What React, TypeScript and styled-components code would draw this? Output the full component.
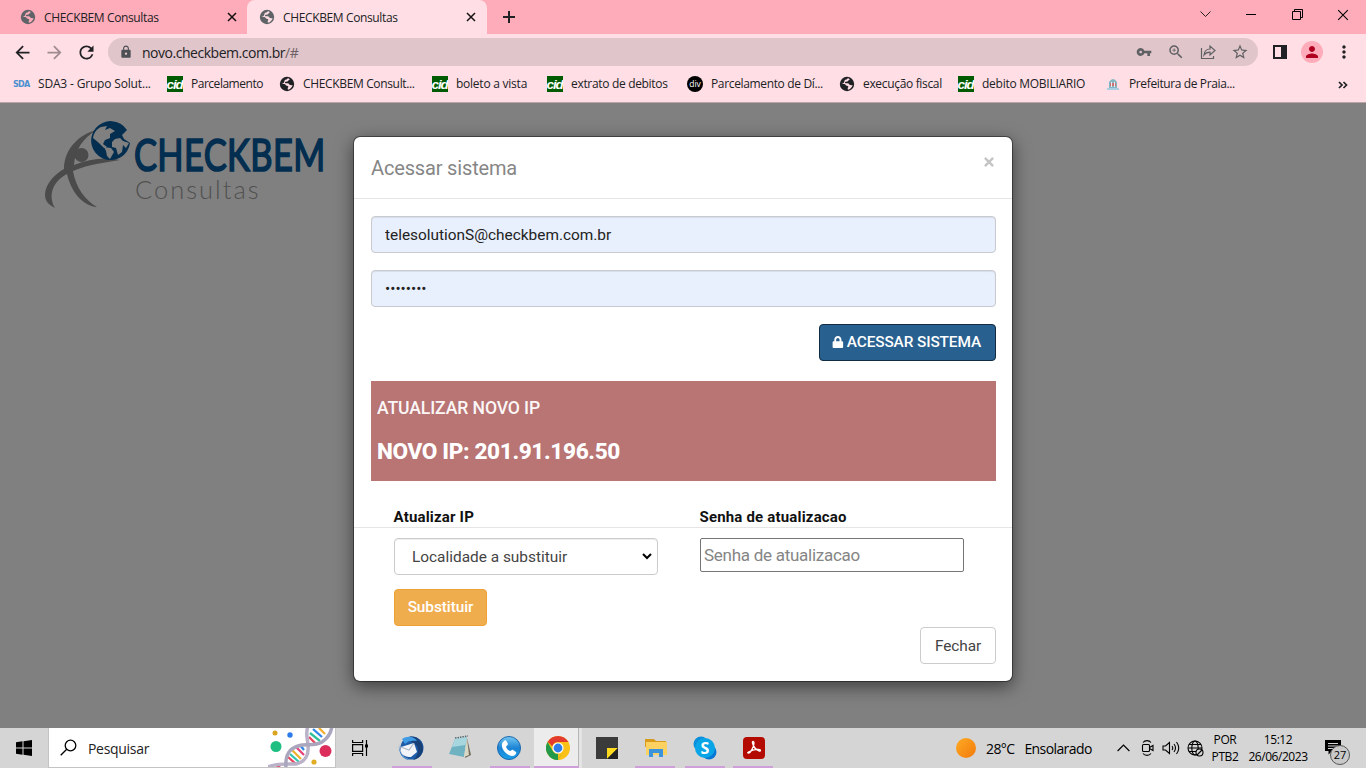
import React from "react";
import styled, { createGlobalStyle } from "styled-components";
import {
  MdArrowBack, MdArrowForward, MdRefresh, MdLock, MdVpnKey, MdZoomIn, MdStarBorder, MdPerson, MdMoreVert,
} from "react-icons/md";
import { FaLock } from "react-icons/fa";

const GlobalStyle = createGlobalStyle`
  * { box-sizing: border-box; }
  body { margin: 0; overflow: hidden; }
  button, input, select { font-family: inherit; margin: 0; }
`;

const Screen = styled.div`
  width: 1366px;
  height: 768px;
  display: flex;
  flex-direction: column;
  font-family: "Open Sans", "Noto Sans", sans-serif;
  font-size: 12px;
  color: #202124;
`;

const Label = styled.span<{ $size?: number; $spacing?: number; $color?: string }>`
  font-size: ${(p) => p.$size ?? 12}px;
  letter-spacing: ${(p) => p.$spacing ?? 0}px;
  color: ${(p) => p.$color ?? "inherit"};
  white-space: nowrap;
`;

/* ---------- browser chrome ---------- */

const TabStrip = styled.div`
  height: 34px;
  background: #ffacba;
  display: flex;
  flex: none;
`;

const Tab = styled.div<{ $active?: boolean }>`
  width: ${(p) => (p.$active ? 240 : 247)}px;
  height: 34px;
  padding: ${(p) => (p.$active ? "0 11px 0 12px" : "0 10px 0 20px")};
  display: flex;
  align-items: center;
  gap: 8px;
  background: ${(p) => (p.$active ? "#ffdfe5" : "transparent")};
  border-radius: 8px 8px 0 0;
  ${Label} { flex: 1; }
`;

const NewTab = styled.div`
  width: 44px;
  display: flex;
  align-items: center;
  justify-content: center;
`;

const WindowButtons = styled.div`
  margin-left: auto;
  display: flex;
  height: 29px;
`;

const WindowButton = styled.div`
  width: 46px;
  display: flex;
  align-items: center;
  justify-content: center;
`;

const Toolbar = styled.div`
  height: 34px;
  flex: none;
  background: #ffdfe5;
  display: flex;
  align-items: center;
  padding-top: 2px;
`;

const NavButton = styled.div<{ $dim?: boolean }>`
  width: 32px;
  display: flex;
  justify-content: center;
  color: ${(p) => (p.$dim ? "#9f8b90" : "#202124")};
`;

const NavGroup = styled.div`
  display: flex;
  padding: 0 6px;
`;

const Address = styled.div`
  width: 1150px;
  height: 28px;
  border-radius: 14px;
  background: #e0c5ca;
  display: flex;
  align-items: center;
  padding: 0 2px 0 11px;
`;

const Url = styled.div`
  flex: 1;
  padding-left: 9px;
  font-size: 14px;
  letter-spacing: -0.47px;
`;

const AddressAction = styled.div`
  width: 32px;
  display: flex;
  justify-content: center;
  color: #5f6064;
`;

const ToolbarEnd = styled.div`
  display: flex;
  align-items: center;
  padding-left: 6px;
`;

const Avatar = styled.div`
  width: 22px;
  height: 22px;
  border-radius: 50%;
  background: #ffacba;
  color: #b00020;
  display: flex;
  align-items: center;
  justify-content: center;
`;

const Bookmarks = styled.div`
  height: 35px;
  flex: none;
  background: #ffdfe5;
  border-bottom: 1px solid #b9a4a8;
  display: flex;
  align-items: center;
  padding: 0 18px 2px 13px;
`;

const Bookmark = styled.div<{ $w: number }>`
  width: ${(p) => p.$w}px;
  display: flex;
  align-items: center;
  gap: 8px;
  ${Label} { margin-top: -1px; }
`;

const CidBadge = styled.svg`
  background: #005a00;
`;

const DivBadge = styled.div`
  width: 16px;
  height: 16px;
  border-radius: 50%;
  background: #000;
  color: #fff;
  font: 8.5px/15px "Open Sans", sans-serif;
  text-align: center;
`;

const SdaBadge = styled.div`
  width: 17px;
  height: 16px;
  color: #4a8fd0;
  font: bold 8px/17px "DejaVu Sans", sans-serif;
  letter-spacing: -0.7px;
`;

const More = styled.div`
  margin-left: auto;
`;

/* ---------- web page ---------- */

const Page = styled.main`
  position: relative;
  height: 625px;
  flex: none;
  background: #808080;
  padding: 13px 0 0 40px;
  overflow: hidden;
  font-family: Roboto, sans-serif;
`;

const Dialog = styled.section`
  position: absolute;
  left: 353px;
  top: 33px;
  width: 660px;
  height: 546px;
  background: #fff;
  background-clip: padding-box;
  border: 1px solid rgba(0, 0, 0, 0.4);
  border-radius: 7px;
  box-shadow: 0 5px 17px rgba(0, 0, 0, 0.5);
  font-size: 15px;
  letter-spacing: 0;
  color: #666;
`;

const DialogHeader = styled.header`
  height: 62px;
  border-bottom: 1px solid #e5e5e5;
  padding: 17px 18px 0 17px;
  display: flex;
  justify-content: space-between;
`;

const Title = styled.h4`
  margin: 0;
  font-size: 20px;
  line-height: 28px;
  font-weight: 400;
  letter-spacing: -0.16px;
  color: #868686;
`;

const CloseMark = styled.svg`
  margin-top: 3px;
`;

const DialogBody = styled.div`
  height: 328px;
  padding: 17px 16px 0 17px;
  display: flex;
  flex-direction: column;
`;

const LoginField = styled.input`
  width: 100%;
  height: 37px;
  flex: none;
  margin-bottom: 17px;
  padding: 0 13px;
  border: 1px solid #c8cacd;
  border-radius: 4px;
  background: #e8effd;
  box-shadow: inset 0 1px 1px rgba(0, 0, 0, 0.075);
  font-size: 15.4px;
  letter-spacing: 0;
  color: #222;
`;

const Button = styled.button<{ $kind: "primary" | "warning" | "plain" }>`
  height: 37px;
  padding: 0 13px;
  border-radius: 4px;
  display: inline-flex;
  align-items: center;
  justify-content: center;
  gap: 3px;
  white-space: nowrap;
  font-size: 15.4px;
  letter-spacing: -0.08px;
  font-weight: ${(p) => (p.$kind === "plain" ? 400 : 500)};
  border: 1px solid ${(p) => ({ primary: "#122b40", warning: "#eea236", plain: "#ccc" })[p.$kind]};
  background: ${(p) => ({ primary: "#286090", warning: "#f0ad4e", plain: "#fff" })[p.$kind]};
  color: ${(p) => (p.$kind === "plain" ? "#444" : "#fff")};
`;

const SignInButton = styled(Button)`
  width: 177px;
  align-self: flex-end;
  flex: none;
  letter-spacing: -0.12px;
  padding: 0 14px 2px 12px;
`;

const IpNotice = styled.div`
  margin-top: 20px;
  height: 100px;
  flex: none;
  background: #b97474;
  color: #fff;
  padding: 15px 6px;
`;

const NoticeTitle = styled.div`
  font-size: 17.6px;
  line-height: 24px;
  letter-spacing: -0.11px;
  font-weight: 500;
  opacity: 0.95;
`;

const NoticeIp = styled.div`
  margin-top: 18px;
  font-size: 22.6px;
  line-height: 28px;
  font-weight: 800;
  letter-spacing: -0.37px;
`;

const FieldLabels = styled.div`
  margin-top: 26px;
  padding-left: 22.5px;
  display: grid;
  grid-template-columns: 306px 1fr;
  color: #111;
  font-weight: 700;
  font-size: 15px;
  line-height: 21px;
  letter-spacing: 0.18px;
`;

const DialogFooter = styled.footer`
  border-top: 1px solid #e5e5e5;
  padding: 10px 16px 0 40px;
  display: flex;
  flex-direction: column;
`;

const FieldRow = styled.div`
  display: grid;
  grid-template-columns: 264px 264px;
  gap: 42px;
  align-items: start;
  height: 51px;
`;

const PlaceSelect = styled.div`
  height: 37px;
  border: 1px solid #ccc;
  border-radius: 4px;
  box-shadow: inset 0 1px 1px rgba(0, 0, 0, 0.075);
  display: flex;
  align-items: center;
  justify-content: space-between;
  padding: 0 5px 0 17px;
  font-size: 15.4px;
  color: #444;
`;

const PasswordField = styled.input`
  height: 34px;
  width: 264px;
  padding: 0 3px;
  border: 1px solid #767676;
  border-radius: 2px;
  font-size: 17px;
  letter-spacing: -0.27px;
  &::placeholder { color: #858585; }
`;

const ReplaceButton = styled(Button)`
  width: 93px;
  padding: 0 0 2px;
`;

const DismissButton = styled(Button)`
  width: 76px;
  margin-top: 1px;
  align-self: flex-end;
`;

/* ---------- taskbar ---------- */

const Taskbar = styled.div`
  height: 40px;
  flex: none;
  background: #d5d5d5;
  display: flex;
  color: #000;
`;

const StartButton = styled.div`
  width: 48px;
  display: flex;
  align-items: center;
  justify-content: center;
`;

const Search = styled.div`
  width: 288px;
  height: 40px;
  background: #fff;
  border: 1px solid #c4c4c4;
  border-top: 0;
  display: flex;
  align-items: center;
  padding-left: 11px;
  gap: 11px;
  overflow: hidden;
  ${Label} { flex: 1; padding-top: 2px; }
`;

const TaskView = styled.div`
  width: 50px;
  display: flex;
  align-items: center;
  justify-content: center;
  padding-right: 2px;
`;

const AppSlot = styled.div<{ $open?: boolean; $active?: boolean }>`
  width: 49px;
  height: 40px;
  display: flex;
  align-items: center;
  justify-content: center;
  background: ${(p) => (p.$active ? "linear-gradient(to right, transparent 1px, #ececec 1px 45px, #b6b6b6 45px 46px, #e4e4e4 46px 49px)" : "none")};
  &::after {
    content: "";
    display: ${(p) => (p.$open ? "block" : "none")};
    width: ${(p) => (p.$active ? 45 : 40)}px;
    height: 2px;
    background: #cf9fd9;
    align-self: flex-end;
    flex: none;
    margin-left: ${(p) => (p.$active ? -45 : -40)}px;
    transform: translateX(${(p) => (p.$active ? 9 : 8)}px);
  }
`;

const Tray = styled.div`
  margin-left: auto;
  display: flex;
  align-items: center;
`;

const Weather = styled.div`
  display: flex;
  align-items: center;
  width: 155px;
  ${Label} { margin-left: 10px; }
`;

const Sun = styled.div`
  width: 20px;
  height: 20px;
  border-radius: 50%;
  background: linear-gradient(135deg, #ffab24, #f27a0c);
`;

const TrayIcon = styled.div`
  width: 24px;
  display: flex;
  justify-content: center;
`;

const Stack = styled.div<{ $w: number }>`
  width: ${(p) => p.$w}px;
  display: flex;
  flex-direction: column;
  align-items: center;
  line-height: 17px;
`;

const Notices = styled.div`
  position: relative;
  width: 53px;
  padding-left: 12px;
  height: 18px;
`;

const NoticeCount = styled.span`
  position: absolute;
  left: 17px;
  top: 6px;
  width: 20px;
  height: 20px;
  border-radius: 50%;
  background: #c9c9c9;
  border: 1px solid #555;
  font-size: 11px;
  line-height: 17px;
  text-align: center;
`;

const Globe = ({ color, bg }: { color: string; bg: string }) => (
  <svg width="16" height="16" viewBox="0 0 16 16">
    <circle cx="8" cy="8" r="7.200" fill={color} />
    <path d="M10.900 3.200c-1.300.2-1.200 1.900-2.500 2.200-.9.200-1.600 0-2.200.6-.6.700 0 1.300.9 1.300 1.600 0 2.800-.1 3.200 1 .4 1 1.700 1 3.300.7-.2 1.100-.7 2-1.400 2.800-1 1.200-2.100 1.800-3.400 2 .3-1.100-.5-1.400.2-2.200.8-.9.100-1.700-1-1.800-1.500-.1-1.300-1.700-2.600-1.800H2.200c1.700 0 2.900-1.100 3.100-2.300.2-1 .3-1.900 1.900-2.100.9-.1 1-.8 1.600-1.300.8.100 1.500.4 2.100.9z" fill={bg} />
  </svg>
);

const Cross = ({ size, color = "#111", width = 1.5 }: { size: number; color?: string; width?: number }) => (
  <svg width={size} height={size} viewBox="0 0 10 10" stroke={color} strokeWidth={width}>
    <path d="M1 1l8 8M9 1 1 9" />
  </svg>
);

const BrandLogo = () => (
  <svg width="300" height="100" viewBox="40 116 300 100">
    <g fill="#4b4b4b">
      <path d="M97 130C82 133 64 147 64 169c-9 5-19 15-19 26 0 6 4 10 10 13-7-12-3-26 12-34 4 17 15 32 30 33-12-7-21-19-24-36 16-7 31-8 47-11-16-3-31-1-46 5 1-14 8-27 23-35z" />
      <circle cx="81.500" cy="155" r="7" />
    </g>
    <path d="M127 130a19.500 19.500 0 1 0 3 13l-6-4-2-4z" fill="#032e50" />
    <path d="M93 138c1-6 4-9 8-11l6-1-2 4 5-2 5 3-5 3 0 4-5 2-2 4 4 3-3 1-5-5zM104 147l7 1 3 4-4 7-3-3-1-5zM112 142l3-3 5-1 3 3 6 2-3 5-3-3-1 7-4 3-2-7-4-1z" fill="#808080" />
    <text transform="translate(134 170.500) scale(.765 1)" fill="#032e50" stroke="#032e50" strokeWidth="1.700" fontFamily="Lato, sans-serif" fontWeight="400" fontSize="45" letterSpacing=".5">CHECKBEM</text>
    <text x="135" y="199" fill="#505050" fontFamily="Lato, sans-serif" fontWeight="300" fontSize="25.500" letterSpacing="2">Consultas</text>
  </svg>
);

const Dna = () => (
  <svg width="67" height="40" viewBox="0 0 67 40">
    <g strokeWidth="2.300">
      <path d="M20 29l8 7" stroke="#e8435a" />
      <path d="M22 26l9 8" stroke="#33c3b0" />
      <path d="M24 22l9 9" stroke="#f0b030" />
      <path d="M28 19l8 8" stroke="#e84378" />
      <path d="M32 17l4 5" stroke="#2e86e8" />
      <path d="M41 9l7 7" stroke="#e8435a" />
      <path d="M42 5l10 8" stroke="#2fc09a" />
      <path d="M45 1l9 8" stroke="#2e86e8" />
      <path d="M51 0l6 6" stroke="#f0b030" />
      <path d="M8 37l6 4" stroke="#e8435a" />
    </g>
    <path d="M0 39c8-4 18-3 28-3 9-2 13-9 12-18 0-7-3-12 0-20" fill="none" stroke="#b9b2c8" strokeWidth="3.500" />
    <path d="M18 40c-1-12 2-19 12-22 8-3 16 1 24-4 6-4 9-8 10-16" fill="none" stroke="#a9a6bd" strokeWidth="3.500" />
    <circle cx="8" cy="18.500" r="5.500" fill="#1fbf82" />
    <circle cx="57.500" cy="23" r="6" fill="#dc2c5c" />
    <circle cx="7" cy="5" r="2.500" fill="#d9a51e" />
    <circle cx="22" cy="7" r="2.700" fill="#2c7be8" />
    <circle cx="46" cy="34" r="2.600" fill="#e0ad25" />
  </svg>
);

const Thunderbird = () => (
  <svg width="26" height="26" viewBox="0 0 26 26">
    <circle cx="14" cy="13" r="11.500" fill="#1f5ca8" />
    <path d="M9 3C14-1 25 3 25 14c0 6-5 10-10 11 5-4 6-9 4-14z" fill="#174079" />
    <path d="M4 4c6-4 13-2 15 2-6-1-9 0-12 3z" fill="#3f9be3" />
    <path d="M3 12 16 8l3 9-6 5C8 22 3 20 3 16z" fill="#f2f4f8" />
    <path d="m3 12 8 3 5-7" fill="none" stroke="#aeb8c8" strokeWidth="1.200" />
    <path d="M1 9c0 8 4 14 11 16C5 25 0 18 1 9z" fill="#2a78c8" />
  </svg>
);

const Notepad = () => (
  <svg width="26" height="26" viewBox="0 0 26 26">
    <path d="m20 3 4 17-6 3z" fill="#6d6a58" />
    <path d="m8 4 12-2-3 20-15-3z" fill="#6fb2c2" />
    <path d="m8 4 12-2-1.500 8L5 12z" fill="#a8d6de" />
    <path d="m20 3 2 17-5 2z" fill="#dad7c4" />
    <path d="m8 3 13-2" stroke="#596b70" strokeWidth="1.500" strokeDasharray="1.500 1" />
  </svg>
);

const Phone = () => (
  <svg width="26" height="26" viewBox="0 0 26 26">
    <defs><linearGradient id="call" x2="0" y2="1"><stop stopColor="#75c8f3" /><stop offset=".5" stopColor="#1c83d4" /><stop offset="1" stopColor="#1aa0e8" /></linearGradient></defs>
    <circle cx="13" cy="13" r="11.500" fill="url(#call)" stroke="#1c67ad" />
    <path d="M8 6c1-1 2-1 3 1l1 2c0 1-2 2-2 3 1 2 2 3 4 4 1 0 2-2 3-1l3 2c1 1-1 4-4 4C10 20 5 14 6 9c0-1 1-2 2-3z" fill="#fff" />
  </svg>
);

const Chrome = () => (
  <svg width="24" height="24" viewBox="0 0 24 24">
    <circle cx="12" cy="12" r="12" fill="#fbc116" />
    <path d="M1.600 6 6.800 15a6 6 0 0 0 5.200 3h3.400L12 24A12 12 0 0 1 1.600 6z" fill="#229a4a" />
    <path d="M1.600 6A12 12 0 0 1 12 0a12 12 0 0 1 10.400 6H12a6 6 0 0 0-5.700 4.500C4.500 8 3 7 1.600 6z" fill="#e33b2e" />
    <path d="M12 24l5.200-9L12 12z" fill="#fbc116" />
    <circle cx="12" cy="12" r="5.600" fill="#fff" />
    <circle cx="12" cy="12" r="4.400" fill="#2f7de9" />
  </svg>
);

const Sticky = () => (
  <svg width="22" height="22" viewBox="0 0 22 22">
    <path d="M0 0h22v22H0z" fill="#3b3b3b" />
    <path d="M11 11h11L11 22z" fill="#ffd91c" />
    <path d="M22 11v11H11z" fill="#222" />
  </svg>
);

const Folder = () => (
  <svg width="22" height="20" viewBox="0 0 22 20">
    <path d="M0 1h9l2 2h10v6H0z" fill="#d99b1c" />
    <path d="M1 4h21v13H1z" fill="#fbd162" />
    <path d="M4 11h14v8h-4v-4H8v4H4z" fill="#3a93db" />
  </svg>
);

const Skype = () => (
  <svg width="24" height="24" viewBox="0 0 24 24">
    <circle cx="8" cy="8" r="7.500" fill="#0b8fdc" />
    <circle cx="16" cy="16" r="7.500" fill="#0878d4" />
    <circle cx="12" cy="12" r="10" fill="#0aa5e6" />
    <text x="12" y="17.500" textAnchor="middle" fontFamily="Open Sans, sans-serif" fontSize="16" fontWeight="700" fill="#fff">S</text>
  </svg>
);

const Acrobat = () => (
  <svg width="22" height="22" viewBox="0 0 22 22">
    <rect width="22" height="22" rx="4" fill="#b30b00" />
    <path d="M5 16c2 1 6-6 6-10 0-2-2-2-1.500 0 1 4 4 7 6.500 8 2 .500 2-1.500 0-1.500-3-.500-8 1-10.500 2.500-.800.500-1 .700-.500 1z" fill="none" stroke="#fff" strokeWidth="1.300" />
  </svg>
);

const Cid = () => (
  <CidBadge width="16" height="16" viewBox="0 0 16 16">
    <text x="-.5" y="13" fill="#fff" fontFamily="Liberation Sans, sans-serif" fontStyle="italic" fontWeight="700" fontSize="13.500" letterSpacing="-1.100">cid</text>
  </CidBadge>
);
const DarkGlobe = () => <Globe color="#202124" bg="#ffdfe5" />;

const TownHall = () => (
  <svg width="15" height="16" viewBox="0 0 15 16">
    <path d="M3 6q4-6 8 0v6H3z" fill="#86b6c4" />
    <path d="M4 7h6v3H4z" fill="#cf6f72" />
    <path d="M5 6h1v5H5zM8 6h1v5H8z" fill="#e6edf0" />
    <path d="M1 13h12" stroke="#91c8e0" strokeWidth="1.500" />
  </svg>
);

const bookmarks = [
  { icon: <SdaBadge>SDA</SdaBadge>, text: "SDA3 - Grupo Solut...", w: 154, s: -0.17 },
  { icon: <Cid />, text: "Parcelamento", w: 112, s: -0.48 },
  { icon: <DarkGlobe />, text: "CHECKBEM Consult...", w: 153, s: -0.35 },
  { icon: <Cid />, text: "boleto a vista", w: 115, s: -0.24 },
  { icon: <Cid />, text: "extrato de debitos", w: 140, s: -0.32 },
  { icon: <DivBadge>div</DivBadge>, text: "Parcelamento de Dí...", w: 152, s: -0.35 },
  { icon: <DarkGlobe />, text: "execução fiscal", w: 119, s: -0.33 },
  { icon: <Cid />, text: "debito MOBILIARIO", w: 148, s: -0.26 },
  { icon: <TownHall />, text: "Prefeitura de Praia...", w: 140, s: -0.38 },
];

const apps = [
  { icon: <Thunderbird />, open: true },
  { icon: <Notepad /> },
  { icon: <Phone />, open: true },
  { icon: <Chrome />, open: true, active: true },
  { icon: <Sticky /> },
  { icon: <Folder />, open: true },
  { icon: <Skype />, open: true },
  { icon: <Acrobat />, open: true },
];

export default function App() {
  return (
    <Screen>
      <GlobalStyle />
      <TabStrip>
        <Tab>
          <Globe color="#5f6368" bg="#ffacba" />
          <Label $spacing={-0.37}>CHECKBEM Consultas</Label>
          <Cross size={10} />
        </Tab>
        <Tab $active>
          <Globe color="#5f6368" bg="#ffdfe5" />
          <Label $spacing={-0.37}>CHECKBEM Consultas</Label>
          <Cross size={10} />
        </Tab>
        <NewTab>
          <svg width="12" height="12" viewBox="0 0 12 12" stroke="#202124" strokeWidth="2"><path d="M6 0v12M0 6h12" /></svg>
        </NewTab>
        <WindowButtons>
          <WindowButton><svg width="11" height="7" viewBox="0 0 11 7" fill="none" stroke="#222"><path d="M.5.5l5 5 5-5" /></svg></WindowButton>
          <WindowButton><svg width="10" height="2" viewBox="0 0 10 2"><path d="M0 0h10v1H0z" /></svg></WindowButton>
          <WindowButton><svg width="11" height="11" viewBox="0 0 11 11" fill="none" stroke="#000"><path d="M.5 2.500h8v8h-8zM2.500 2.500v-2h8v8h-2" /></svg></WindowButton>
          <WindowButton><Cross size={12} color="#000" width={0.9} /></WindowButton>
        </WindowButtons>
      </TabStrip>
      <Toolbar>
        <NavGroup>
          <NavButton><MdArrowBack size={21} /></NavButton>
          <NavButton $dim><MdArrowForward size={21} /></NavButton>
          <NavButton><MdRefresh size={21} /></NavButton>
        </NavGroup>
        <Address>
          <MdLock size={14} color="#4d5055" />
          <Url>novo.checkbem.com.br<Label $size={14} $spacing={-0.47} $color="#6b6266">/#</Label></Url>
          <AddressAction><MdVpnKey size={16} /></AddressAction>
          <AddressAction><MdZoomIn size={18} /></AddressAction>
          <AddressAction>
            <svg width="16" height="16" viewBox="0 0 16 16" fill="none" stroke="currentColor" strokeWidth="1.200">
              <path d="M1.500 4v10.500h12V12M4 11c.5-4 3-6 6-6V2l5 4.500-5 4.500V8.200C7.500 8.200 5.500 9 4 11z" />
            </svg>
          </AddressAction>
          <AddressAction><MdStarBorder size={18} /></AddressAction>
        </Address>
        <ToolbarEnd>
          <NavButton><svg width="14" height="14" viewBox="0 0 14 14"><path d="M0 0h14v14H0zM2 2v10h6V2z" fill="#202124" fillRule="evenodd" /></svg></NavButton>
          <NavButton><Avatar><MdPerson size={18} /></Avatar></NavButton>
          <NavButton><MdMoreVert size={20} /></NavButton>
        </ToolbarEnd>
      </Toolbar>
      <Bookmarks>
        {bookmarks.map((b, i) => (
          <Bookmark key={i} $w={b.w}>
            {b.icon}
            <Label $spacing={b.s}>{b.text}</Label>
          </Bookmark>
        ))}
        <More>
          <svg width="10" height="8" viewBox="0 0 10 8" fill="none" stroke="#202124" strokeWidth="1.700"><path d="M1 1l3 3-3 3M5.500 1l3 3-3 3" /></svg>
        </More>
      </Bookmarks>

      <Page>
        <BrandLogo />
        <Dialog>
          <DialogHeader>
            <Title>Acessar sistema</Title>
            <CloseMark width="10" height="10" viewBox="0 0 10 10" stroke="#c4c4c4" strokeWidth="2.400"><path d="M.9.900l8.200 8.200M9.100.900.9 9.100" /></CloseMark>
          </DialogHeader>
          <DialogBody>
            <LoginField defaultValue="telesolutionS@checkbem.com.br" />
            <LoginField type="password" defaultValue="12345678" />
            <SignInButton $kind="primary"><FaLock size={12} />ACESSAR SISTEMA</SignInButton>
            <IpNotice>
              <NoticeTitle>ATUALIZAR NOVO IP</NoticeTitle>
              <NoticeIp>NOVO IP: 201.91.196.50</NoticeIp>
            </IpNotice>
            <FieldLabels>
              <span>Atualizar IP</span>
              <span>Senha de atualizacao</span>
            </FieldLabels>
          </DialogBody>
          <DialogFooter>
            <FieldRow>
              <PlaceSelect>
                Localidade a substituir
                <svg width="10" height="7" viewBox="0 0 10 7" fill="none" stroke="#000" strokeWidth="2"><path d="M1 1l4 4 4-4" /></svg>
              </PlaceSelect>
              <PasswordField placeholder="Senha de atualizacao" />
            </FieldRow>
            <ReplaceButton $kind="warning">Substituir</ReplaceButton>
            <DismissButton $kind="plain">Fechar</DismissButton>
          </DialogFooter>
        </Dialog>
      </Page>

      <Taskbar>
        <StartButton>
          <svg width="16" height="16" viewBox="0 0 16 16"><path d="M0 2.200 6.500 1.300v6.200H0zM7.500 1.200 16 0v7.500H7.500zM0 8.500h6.500v6.200L0 13.800zM7.500 8.500H16V16l-8.500-1.200z" /></svg>
        </StartButton>
        <Search>
          <svg width="17" height="17" viewBox="0 0 17 17" fill="none" stroke="#000" strokeWidth="1.300"><circle cx="10.500" cy="6.500" r="5.300" /><path d="M6.700 10.300.7 16.300" /></svg>
          <Label $size={14} $spacing={-0.3} $color="#222">Pesquisar</Label>
          <Dna />
        </Search>
        <TaskView>
          <svg width="17" height="16" viewBox="0 0 17 16" fill="none" stroke="#000" strokeWidth="1.200">
            <path d="M.6 4.600h10v6.800H.6zM.6 0v2.500h10V0M.6 16v-2.500h10V16M14.500 0v16" /><path d="M13 4.500h3v3h-3z" fill="#000" stroke="none" />
          </svg>
        </TaskView>
        {apps.map((a, i) => (
          <AppSlot key={i} $open={a.open} $active={a.active}>{a.icon}</AppSlot>
        ))}
        <Tray>
          <Weather>
            <Sun />
            <Label $size={14} $spacing={-0.6}>28°C</Label>
            <Label $size={14} $spacing={-0.6}>Ensolarado</Label>
          </Weather>
          <TrayIcon><svg width="13" height="8" viewBox="0 0 13 8" fill="none" stroke="#000" strokeWidth="1.200"><path d="M.6 7 6.500 1l5.900 6" /></svg></TrayIcon>
          <TrayIcon><svg width="13" height="16" viewBox="0 0 13 16" fill="none" stroke="#000" strokeWidth="1.100"><path d="M2 2.500C4 0 8 0 10 2.500M2 13.500c2 2.500 6 2.500 8 0" /><rect x="1.500" y="4.500" width="7" height="7" rx="1" /><path d="M8.500 7.500l3.500-2v5l-3.500-2" /></svg></TrayIcon>
          <TrayIcon><svg width="18" height="14" viewBox="0 0 18 14" fill="none" stroke="#000" strokeWidth="1.100"><path d="M1 5h2.500L7.500 1.500v11L3.500 9H1zM10 5q1.500 2 0 4M12 3q3 4 0 8M14.500 1q4.500 6 0 12" /></svg></TrayIcon>
          <TrayIcon><svg width="17" height="17" viewBox="0 0 17 17" fill="none" stroke="#000" strokeWidth="1.100"><circle cx="8" cy="8" r="7" /><ellipse cx="8" cy="8" rx="3.200" ry="7" /><path d="M1 8h14M2 4.500h12M2 11.500h8" /><circle cx="12.500" cy="12.500" r="3.500" fill="#d5d5d5" /><path d="M10 15l5-5" /></svg></TrayIcon>
          <Stack $w={36}><Label $spacing={-0.4}>POR</Label><Label $spacing={-0.4}>PTB2</Label></Stack>
          <Stack $w={70}><Label $spacing={-0.45}>15:12</Label><Label $spacing={-0.45}>26/06/2023</Label></Stack>
          <Notices>
            <svg width="17" height="16" viewBox="0 0 17 16"><path d="M0 1h16v11H7l-3.500 3.500V12H0z" /><path d="M3 4.500h10M3 7h10M3 9.500h7" stroke="#d5d5d5" /></svg>
            <NoticeCount>27</NoticeCount>
          </Notices>
        </Tray>
      </Taskbar>
    </Screen>
  );
}
